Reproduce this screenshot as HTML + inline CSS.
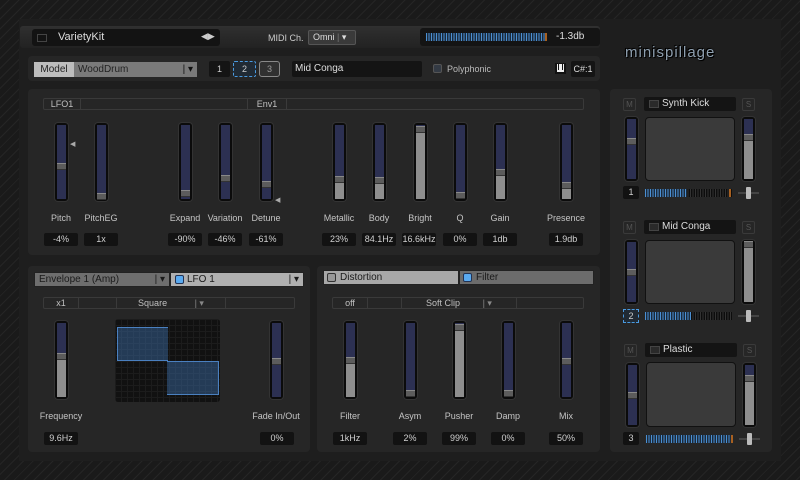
<!DOCTYPE html>
<html><head><meta charset="utf-8"><style>
*{box-sizing:border-box;margin:0;padding:0}
body{width:800px;height:480px;overflow:hidden;position:relative;font-family:"Liberation Sans",sans-serif;font-size:9px;color:#c8c8c8;
background:#1a1a1a repeating-linear-gradient(135deg,#1a1a1a 0 6px,#252525 6px 7px);}
.a{position:absolute}
.main{left:19px;top:19px;width:762px;height:442px;background:#1e1e1e}
.panel{background:#262626;border-radius:4px}
.sl{position:absolute;width:13px;background:#0b0b0b;border-radius:3px;box-shadow:0 0 0 1px #333}
.sl .b{position:absolute;left:2px;right:2px;top:2px;bottom:2px;background:#2c3052}
.sl .g{position:absolute;left:2px;right:2px;bottom:2px;background:#8e8e8e}
.sl .t{position:absolute;left:2px;right:2px;height:7px;background:#5c5c5c;border-top:1px solid #888;border-bottom:1px solid #333}
.lbl{position:absolute;text-align:center;width:60px;font-size:9px;color:#c4c4c4}
.val{position:absolute;height:13px;width:34px;background:#121212;border-radius:2px;text-align:center;line-height:13px;font-size:9px;color:#d0d0d0}
.row{position:absolute;height:12px;border:1px solid #3a3a3a;border-radius:2px;font-size:9px;line-height:10px;color:#c0c0c0}
.row span{position:absolute;top:0;text-align:center}
.meter{position:absolute;background:repeating-linear-gradient(90deg,#4b8fd2 0 1px,#1b2a3a 1px 2.5px)}
.mb{position:absolute;width:13px;height:13px;border:1px solid #3a3a3a;border-radius:2px;color:#555;font-size:8px;text-align:center;line-height:11px}
.nm{position:absolute;height:14px;background:#141414;border-radius:2px;font-size:10px;line-height:14px;color:#ddd}
.nm i{position:absolute;left:5px;top:3px;width:10px;height:8px;border:1px solid #444;background:#2a2a2a}
.pad{position:absolute;background:#3a3a3a;border:1px solid #111;border-radius:4px}
.mini{position:absolute;height:2px;background:#444}
.mini b{position:absolute;top:-5px;width:5px;height:12px;background:#bbb;border-radius:1px}
</style></head><body>
<div class="a main"></div>
<!-- top bar -->
<div class="a" style="left:20px;top:26px;width:580px;height:22px;background:linear-gradient(#303030,#222);border-radius:3px"></div>
<div class="a" style="left:32px;top:29px;width:188px;height:17px;background:#131313;border-radius:3px"></div>
<div class="a" style="left:37px;top:34px;width:10px;height:8px;border:1px solid #444"></div>
<div class="a" style="left:58px;top:31px;font-size:11px;color:#ddd">VarietyKit</div>
<div class="a" style="left:201px;top:31px;font-size:9px;color:#ccc">◀▶</div>
<div class="a" style="left:268px;top:33px;font-size:9px;color:#ccc">MIDI Ch.</div>
<div class="a" style="left:308px;top:30px;width:48px;height:15px;background:#3a3a3a;border:1px solid #555;border-radius:2px;font-size:9px;color:#ddd;line-height:13px;padding-left:4px">Omni <span style="color:#777">|</span> ▾</div>
<div class="a" style="left:420px;top:28px;width:180px;height:18px;background:#141414;border-radius:3px"></div>
<div class="meter" style="left:426px;top:33px;width:120px;height:8px"></div>
<div class="a" style="left:545px;top:33px;width:2px;height:8px;background:#a86020"></div>
<div class="a" style="left:556px;top:31px;font-size:10px;color:#ddd">-1.3db</div>
<!-- logo -->
<div class="a" style="left:625px;top:44px;font-size:15px;color:#8fa0b0;letter-spacing:1px;text-shadow:0 0 2px #000,1px 1px 0 #000,-1px -1px 0 #000">minispillage</div>
<!-- row 2 -->
<div class="a panel" style="left:28px;top:56px;width:572px;height:25px"></div>
<div class="a" style="left:34px;top:62px;width:40px;height:15px;background:#bdbdbd;color:#222;font-size:10px;line-height:15px;text-align:center">Model</div>
<div class="a" style="left:74px;top:62px;width:123px;height:15px;background:#7a7a7a;color:#222;font-size:10px;line-height:15px;padding-left:4px">WoodDrum<span style="position:absolute;right:4px;color:#111">| ▾</span></div>
<div class="a" style="left:209px;top:61px;width:21px;height:16px;background:#141414;border-radius:2px;text-align:center;line-height:16px;color:#ccc">1</div>
<div class="a" style="left:233px;top:61px;width:23px;height:16px;background:#202a34;border:1px dashed #4a9ae0;border-radius:2px;text-align:center;line-height:14px;color:#ccc">2</div>
<div class="a" style="left:259px;top:61px;width:21px;height:16px;background:#303030;border:1px solid #888;border-radius:3px;text-align:center;line-height:14px;color:#999">3</div>
<div class="a" style="left:292px;top:61px;width:130px;height:16px;background:#141414;border-radius:2px;font-size:10px;line-height:16px;padding-left:3px;color:#ddd">Mid Conga</div>
<div class="a" style="left:433px;top:64px;width:9px;height:9px;background:#333a44;border:1px solid #555;border-radius:2px"></div>
<div class="a" style="left:447px;top:64px;font-size:9px;color:#bbb">Polyphonic</div>
<div class="a" style="left:555px;top:63px;width:11px;height:11px;background:#eee;border:2px solid #111;border-top-width:1px"></div>
<div class="a" style="left:558px;top:63px;width:1px;height:7px;background:#111"></div><div class="a" style="left:562px;top:63px;width:1px;height:7px;background:#111"></div>
<div class="a" style="left:571px;top:61px;width:24px;height:16px;background:#141414;border-radius:2px;text-align:center;line-height:16px;color:#ddd">C#:1</div>

<!-- main top panel -->
<div class="a panel" style="left:28px;top:89px;width:572px;height:166px"></div>
<div class="row" style="left:43px;top:98px;width:541px"><span style="left:0;width:37px;border-right:1px solid #3a3a3a">LFO1</span><span style="left:203px;width:40px;border-left:1px solid #3a3a3a;border-right:1px solid #3a3a3a">Env1</span></div>
<div class="a" style="left:70px;top:140px;color:#aaa;font-size:7px">◀</div>
<div class="a" style="left:275px;top:196px;color:#aaa;font-size:7px">◀</div>

<div class="sl" style="left:55px;top:123px;height:78px"><div class="b"></div><div class="t" style="top:40px"></div></div>
<div class="sl" style="left:95px;top:123px;height:78px"><div class="b"></div><div class="t" style="top:70px"></div></div>
<div class="sl" style="left:179px;top:123px;height:78px"><div class="b"></div><div class="t" style="top:67px"></div></div>
<div class="sl" style="left:219px;top:123px;height:78px"><div class="b"></div><div class="t" style="top:52px"></div></div>
<div class="sl" style="left:260px;top:123px;height:78px"><div class="b"></div><div class="t" style="top:58px"></div></div>
<div class="sl" style="left:333px;top:123px;height:78px"><div class="b"></div><div class="g" style="top:58px"></div><div class="t" style="top:53px"></div></div>
<div class="sl" style="left:373px;top:123px;height:78px"><div class="b"></div><div class="g" style="top:59px"></div><div class="t" style="top:54px"></div></div>
<div class="sl" style="left:414px;top:123px;height:78px"><div class="b"></div><div class="g" style="top:8px"></div><div class="t" style="top:3px"></div></div>
<div class="sl" style="left:454px;top:123px;height:78px"><div class="b"></div><div class="t" style="top:69px"></div></div>
<div class="sl" style="left:494px;top:123px;height:78px"><div class="b"></div><div class="g" style="top:51px"></div><div class="t" style="top:46px"></div></div>
<div class="sl" style="left:560px;top:123px;height:78px"><div class="b"></div><div class="g" style="top:64px"></div><div class="t" style="top:59px"></div></div>

<div class="lbl" style="left:31px;top:213px">Pitch</div>
<div class="lbl" style="left:71px;top:213px">PitchEG</div>
<div class="lbl" style="left:155px;top:213px">Expand</div>
<div class="lbl" style="left:195px;top:213px">Variation</div>
<div class="lbl" style="left:236px;top:213px">Detune</div>
<div class="lbl" style="left:309px;top:213px">Metallic</div>
<div class="lbl" style="left:349px;top:213px">Body</div>
<div class="lbl" style="left:390px;top:213px">Bright</div>
<div class="lbl" style="left:430px;top:213px">Q</div>
<div class="lbl" style="left:470px;top:213px">Gain</div>
<div class="lbl" style="left:536px;top:213px">Presence</div>

<div class="val" style="left:44px;top:233px">-4%</div>
<div class="val" style="left:84px;top:233px">1x</div>
<div class="val" style="left:168px;top:233px">-90%</div>
<div class="val" style="left:208px;top:233px">-46%</div>
<div class="val" style="left:249px;top:233px">-61%</div>
<div class="val" style="left:322px;top:233px">23%</div>
<div class="val" style="left:362px;top:233px">84.1Hz</div>
<div class="val" style="left:402px;top:233px">16.6kHz</div>
<div class="val" style="left:443px;top:233px">0%</div>
<div class="val" style="left:483px;top:233px">1db</div>
<div class="val" style="left:549px;top:233px">1.9db</div>

<!-- bottom left -->
<div class="a panel" style="left:28px;top:266px;width:282px;height:186px"></div>
<div class="a" style="left:34px;top:272px;width:136px;height:15px;background:#6e6e6e;border:1px solid #222;font-size:10px;color:#1a1a1a;line-height:13px;padding-left:4px">Envelope 1 (Amp)<span style="position:absolute;right:4px">| ▾</span></div>
<div class="a" style="left:170px;top:272px;width:134px;height:15px;background:#b0b0b0;border:1px solid #222;font-size:10px;color:#1a1a1a;line-height:13px;padding-left:16px">LFO 1<span style="position:absolute;left:4px;top:2px;width:9px;height:9px;background:#5aaaf0;border:1px solid #235;border-radius:2px"></span><span style="position:absolute;right:4px">| ▾</span></div>
<div class="row" style="left:43px;top:297px;width:252px"><span style="left:0;width:35px;border-right:1px solid #3a3a3a">x1</span><span style="left:72px;width:110px;border-left:1px solid #3a3a3a;border-right:1px solid #3a3a3a">Square <span style="position:static;color:#888">&nbsp;&nbsp;&nbsp;&nbsp;&nbsp;&nbsp;&nbsp;&nbsp;&nbsp;&nbsp;| ▾</span></span></div>
<div class="sl" style="left:55px;top:321px;height:78px"><div class="b"></div><div class="g" style="top:38px"></div><div class="t" style="top:32px"></div></div>
<div class="sl" style="left:270px;top:321px;height:78px"><div class="b"></div><div class="t" style="top:37px"></div></div>
<div class="a" style="left:115px;top:319px;width:105px;height:83px;background:#111;border-radius:3px;background-image:linear-gradient(#1c1c1c 1px,transparent 1px),linear-gradient(90deg,#1c1c1c 1px,transparent 1px);background-size:6px 6px"></div>
<div class="a" style="left:117px;top:327px;width:51px;height:34px;background:rgba(60,110,170,0.45);border:1px solid #4a80c0;border-right:none"></div>
<div class="a" style="left:167px;top:361px;width:52px;height:34px;background:rgba(60,110,170,0.45);border:1px solid #4a80c0;border-left:none"></div>
<div class="lbl" style="left:31px;top:411px">Frequency</div>
<div class="lbl" style="left:246px;top:411px">Fade In/Out</div>
<div class="val" style="left:44px;top:432px">9.6Hz</div>
<div class="val" style="left:260px;top:432px">0%</div>

<!-- bottom mid -->
<div class="a panel" style="left:317px;top:266px;width:283px;height:186px"></div>
<div class="a" style="left:323px;top:270px;width:136px;height:15px;background:#a8a8a8;border:1px solid #222;font-size:10px;color:#1a1a1a;line-height:13px;padding-left:16px">Distortion<span style="position:absolute;left:3px;top:2px;width:9px;height:9px;background:#999;border:1px solid #333;border-radius:2px"></span></div>
<div class="a" style="left:459px;top:270px;width:135px;height:15px;background:#6c6c6c;border:1px solid #222;font-size:10px;color:#1a1a1a;line-height:13px;padding-left:16px">Filter<span style="position:absolute;left:3px;top:2px;width:9px;height:9px;background:#5aaaf0;border:1px solid #235;border-radius:2px"></span></div>
<div class="row" style="left:332px;top:297px;width:252px"><span style="left:0;width:35px;border-right:1px solid #3a3a3a">off</span><span style="left:68px;width:116px;border-left:1px solid #3a3a3a;border-right:1px solid #3a3a3a">Soft Clip <span style="position:static;color:#888">&nbsp;&nbsp;&nbsp;&nbsp;&nbsp;&nbsp;&nbsp;&nbsp;| ▾</span></span></div>
<div class="sl" style="left:344px;top:321px;height:78px"><div class="b"></div><div class="g" style="top:42px"></div><div class="t" style="top:36px"></div></div>
<div class="sl" style="left:404px;top:321px;height:78px"><div class="b"></div><div class="t" style="top:69px"></div></div>
<div class="sl" style="left:453px;top:321px;height:78px"><div class="b"></div><div class="g" style="top:9px"></div><div class="t" style="top:3px"></div></div>
<div class="sl" style="left:502px;top:321px;height:78px"><div class="b"></div><div class="t" style="top:69px"></div></div>
<div class="sl" style="left:560px;top:321px;height:78px"><div class="b"></div><div class="t" style="top:37px"></div></div>
<div class="lbl" style="left:320px;top:411px">Filter</div>
<div class="lbl" style="left:380px;top:411px">Asym</div>
<div class="lbl" style="left:429px;top:411px">Pusher</div>
<div class="lbl" style="left:478px;top:411px">Damp</div>
<div class="lbl" style="left:536px;top:411px">Mix</div>
<div class="val" style="left:333px;top:432px">1kHz</div>
<div class="val" style="left:393px;top:432px">2%</div>
<div class="val" style="left:442px;top:432px">99%</div>
<div class="val" style="left:491px;top:432px">0%</div>
<div class="val" style="left:549px;top:432px">50%</div>

<!-- right panel -->
<div class="a panel" style="left:610px;top:89px;width:162px;height:363px"></div>

<div class="mb" style="left:623px;top:98px">M</div>
<div class="nm" style="left:644px;top:97px;width:92px;padding-left:18px">Synth Kick<i></i></div>
<div class="mb" style="left:742px;top:98px">S</div>
<div class="sl" style="left:625px;top:117px;height:64px"><div class="b"></div><div class="t" style="top:21px"></div></div>
<div class="pad" style="left:645px;top:117px;width:90px;height:64px"></div>
<div class="sl" style="left:742px;top:117px;height:64px"><div class="b"></div><div class="g" style="top:22px"></div><div class="t" style="top:17px"></div></div>
<div class="val" style="left:623px;top:186px;width:16px">1</div>
<div class="a" style="left:645px;top:189px;width:87px;height:8px;background:repeating-linear-gradient(90deg,#333 0 1px,#0d0d0d 1px 2.5px)"></div>
<div class="meter" style="left:645px;top:189px;width:42px;height:8px"></div>
<div class="a" style="left:729px;top:189px;width:2px;height:8px;background:#a86020"></div>
<div class="mini" style="left:738px;top:192px;width:21px"><b style="left:8px"></b></div>

<div class="mb" style="left:623px;top:221px">M</div>
<div class="nm" style="left:644px;top:220px;width:92px;padding-left:18px">Mid Conga<i></i></div>
<div class="mb" style="left:742px;top:221px">S</div>
<div class="sl" style="left:625px;top:240px;height:64px"><div class="b"></div><div class="t" style="top:29px"></div></div>
<div class="pad" style="left:645px;top:240px;width:90px;height:64px"></div>
<div class="sl" style="left:742px;top:240px;height:64px"><div class="b"></div><div class="g" style="top:6px"></div><div class="t" style="top:1px"></div></div>
<div class="a" style="left:623px;top:309px;width:16px;height:14px;border:1px dashed #4a9ae0;background:#202a34;text-align:center;line-height:12px;color:#ccc">2</div>
<div class="a" style="left:645px;top:312px;width:87px;height:8px;background:repeating-linear-gradient(90deg,#333 0 1px,#0d0d0d 1px 2.5px)"></div>
<div class="meter" style="left:645px;top:312px;width:46px;height:8px"></div>
<div class="mini" style="left:738px;top:315px;width:21px"><b style="left:8px"></b></div>

<div class="mb" style="left:624px;top:344px">M</div>
<div class="nm" style="left:645px;top:343px;width:92px;padding-left:18px">Plastic<i></i></div>
<div class="mb" style="left:743px;top:344px">S</div>
<div class="sl" style="left:626px;top:363px;height:64px"><div class="b"></div><div class="t" style="top:29px"></div></div>
<div class="pad" style="left:646px;top:362px;width:90px;height:65px"></div>
<div class="sl" style="left:743px;top:363px;height:64px"><div class="b"></div><div class="g" style="top:17px"></div><div class="t" style="top:12px"></div></div>
<div class="val" style="left:623px;top:432px;width:16px">3</div>
<div class="meter" style="left:646px;top:435px;width:86px;height:8px"></div>
<div class="a" style="left:731px;top:435px;width:2px;height:8px;background:#a86020"></div>
<div class="mini" style="left:739px;top:438px;width:21px"><b style="left:8px"></b></div>
</body></html>
